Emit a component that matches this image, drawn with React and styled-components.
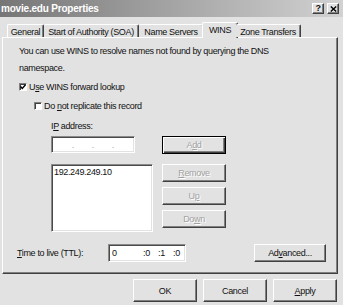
import React from 'react'
import styled, { createGlobalStyle } from 'styled-components'

const GlobalStyle = createGlobalStyle`
  html, body {
    margin: 0;
    padding: 0;
    background: #e2e2e2;
  }
`

const Window = styled.div`
  width: 343px;
  height: 305px;
  overflow: hidden;
  display: flex;
  flex-direction: column;
  background: #e2e2e2;
  color: #111;
  font-family: "Liberation Sans", Arial, sans-serif;
  font-size: 9px;
  letter-spacing: -0.35px;
`

const TitleBar = styled.div`
  flex: none;
  height: 17px;
  display: flex;
  align-items: center;
  justify-content: space-between;
  padding: 0 4px 0 1px;
  background: linear-gradient(to right, #767676, #d2d2d2);
`

const Title = styled.span`
  color: #fff;
  font-weight: bold;
  font-size: 10px;
  letter-spacing: -0.2px;
`

const CaptionButtons = styled.div`
  display: flex;
  gap: 3px;
`

const CaptionButton = styled.div`
  box-sizing: border-box;
  width: 12px;
  height: 11px;
  display: flex;
  align-items: center;
  justify-content: center;
  background: #e2e2e2;
  border: 1px solid;
  border-color: #fff #404040 #404040 #fff;
  box-shadow: inset -1px -1px #808080;
  font-weight: bold;
  font-size: 9px;
  line-height: 1;
`

const Body = styled.div`
  flex: 1;
  display: flex;
  flex-direction: column;
  padding: 5px 5px 0 2px;
`

const TabRow = styled.div`
  display: flex;
  align-items: flex-end;
  height: 15px;
  padding-left: 5px;
  position: relative;
  z-index: 1;
`

const Tab = styled.div`
  box-sizing: border-box;
  width: ${p => p.$w}px;
  height: ${p => (p.$active ? 16 : 13)}px;
  margin: 0 ${p => (p.$active ? -2 : 0)}px ${p => (p.$active ? -1 : 0)}px;
  padding-top: 2px;
  display: flex;
  justify-content: center;
  line-height: 11px;
  white-space: nowrap;
  background: #e2e2e2;
  border-top: 1px solid #fff;
  border-left: ${p => (p.$first || p.$active ? '1px solid #fff' : 'none')};
  border-right: 1px solid #404040;
  box-shadow: inset -1px 0 #808080;
  border-radius: 2px 2px 0 0;
`

const Panel = styled.div`
  box-sizing: border-box;
  height: 237px;
  display: flex;
  flex-direction: column;
  padding: 5px 11px 0 16px;
  border: 1px solid;
  border-color: #fff #404040 #404040 #fff;
  box-shadow: inset -1px -1px #808080;
`

const Intro = styled.p`
  margin: 0;
  max-width: 268px;
  line-height: 17px;
`

const CheckRow = styled.div`
  display: flex;
  align-items: center;
  gap: 2px;
  height: 13px;
  margin-top: ${p => p.$mt}px;
  margin-left: ${p => p.$indent || 0}px;
`

const CheckBox = styled.span`
  box-sizing: border-box;
  width: 8px;
  height: 8px;
  display: flex;
  align-items: center;
  justify-content: center;
  background: #fff;
  border: 1px solid;
  border-color: #808080 #fff #fff #808080;
  box-shadow: inset 1px 1px #404040;
`

const Key = styled.span`
  text-decoration: underline;
`

const FieldLabel = styled.div`
  height: 13px;
  line-height: 13px;
  margin: 8px 0 0 32px;
`

const IpGrid = styled.div`
  display: grid;
  grid-template-columns: 102px 64px;
  column-gap: 9px;
  row-gap: 10px;
  margin: 3px 0 0 32px;
`

const Sunken = styled.div`
  box-sizing: border-box;
  background: #fff;
  border: 1px solid;
  border-color: #8a8a8a #fff #fff #8a8a8a;
  box-shadow: inset 1px 1px #4a4a4a, inset -1px -1px #e2e2e2;
`

const IpField = styled(Sunken)`
  width: 84px;
  height: 17px;
  display: flex;
  align-items: center;
  padding-left: 2px;
  color: #a0a0a0;
`

const IpPart = styled.span`
  width: 20px;
  text-align: right;
`

const ListBox = styled(Sunken)`
  height: 68px;
  padding: 1px 2px;
  line-height: 13px;
`

const ButtonStack = styled.div`
  display: flex;
  flex-direction: column;
  gap: 5px;
`

const Button = styled.div`
  box-sizing: border-box;
  width: ${p => p.$w || 64}px;
  height: ${p => p.$h || 18}px;
  display: flex;
  align-items: center;
  justify-content: center;
  background: #e2e2e2;
  border: 1px solid;
  border-color: ${p => (p.$default ? '#000' : '#fff #404040 #404040 #fff')};
  box-shadow: ${p =>
    p.$default
      ? 'inset 1px 1px #fff, inset -1px -1px #404040, inset -2px -2px #808080'
      : 'inset -1px -1px #808080'};
  color: ${p => (p.$disabled ? '#a2a2a2' : '#111')};
  text-shadow: ${p => (p.$disabled ? '1px 1px 0 #fff' : 'none')};
`

const TtlRow = styled.div`
  display: flex;
  align-items: center;
  height: 18px;
  margin: 12px 0 0 -2px;
`

const TtlLabel = styled.span`
  width: 91px;
`

const TtlField = styled(Sunken)`
  width: 78px;
  height: 18px;
  display: flex;
  align-items: center;
  padding-left: 3px;
`

const TtlPart = styled.span`
  width: ${p => p.$w}px;
`

const Advanced = styled(Button)`
  margin-left: auto;
`

const Footer = styled.div`
  display: flex;
  justify-content: flex-end;
  gap: 6px;
  margin-top: 5px;
  padding-right: 1px;
`

const tabs = [
  { name: 'General', w: 37 },
  { name: 'Start of Authority (SOA)', w: 95 },
  { name: 'Name Servers', w: 65 },
  { name: 'WINS', w: 36, active: true },
  { name: 'Zone Transfers', w: 65 },
]

const Check = () => (
  <svg width="6" height="6" viewBox="0 0 6 6">
    <path d="M0.5 2.5 L2.3 4.5 L5.5 0.8" fill="none" stroke="#000" strokeWidth="1.4" />
  </svg>
)

const CloseGlyph = () => (
  <svg width="7" height="6" viewBox="0 0 7 6">
    <path d="M0.8 0.5 L6.2 5.5 M6.2 0.5 L0.8 5.5" fill="none" stroke="#000" strokeWidth="1.4" />
  </svg>
)

export default function App() {
  return (
    <Window>
      <GlobalStyle />
      <TitleBar>
        <Title>movie.edu Properties</Title>
        <CaptionButtons>
          <CaptionButton>?</CaptionButton>
          <CaptionButton><CloseGlyph /></CaptionButton>
        </CaptionButtons>
      </TitleBar>
      <Body>
        <TabRow>
          {tabs.map((t, i) => (
            <Tab key={t.name} $w={t.w} $active={t.active} $first={i === 0}>{t.name}</Tab>
          ))}
        </TabRow>
        <Panel>
          <Intro>You can use WINS to resolve names not found by querying the DNS namespace.</Intro>
          <CheckRow $mt={3}>
            <CheckBox><Check /></CheckBox>
            <span>U<Key>s</Key>e WINS forward lookup</span>
          </CheckRow>
          <CheckRow $mt={6} $indent={15}>
            <CheckBox />
            <span>Do <Key>n</Key>ot replicate this record</span>
          </CheckRow>
          <FieldLabel>I<Key>P</Key> address:</FieldLabel>
          <IpGrid>
            <IpField>
              <IpPart>.</IpPart>
              <IpPart>.</IpPart>
              <IpPart>.</IpPart>
            </IpField>
            <Button $default $disabled>A<Key>d</Key>d</Button>
            <ListBox>192.249.249.10</ListBox>
            <ButtonStack>
              <Button $disabled><Key>R</Key>emove</Button>
              <Button $disabled>U<Key>p</Key></Button>
              <Button $disabled>Do<Key>w</Key>n</Button>
            </ButtonStack>
          </IpGrid>
          <TtlRow>
            <TtlLabel><Key>T</Key>ime to live (TTL):</TtlLabel>
            <TtlField>
              <TtlPart $w={31}>0</TtlPart>
              <TtlPart $w={15}>:0</TtlPart>
              <TtlPart $w={15}>:1</TtlPart>
              <TtlPart $w={10}>:0</TtlPart>
            </TtlField>
            <Advanced $w={72}>Ad<Key>v</Key>anced...</Advanced>
          </TtlRow>
        </Panel>
        <Footer>
          <Button $h={23}>OK</Button>
          <Button $h={23}>Cancel</Button>
          <Button $h={23}><Key>A</Key>pply</Button>
        </Footer>
      </Body>
    </Window>
  )
}
